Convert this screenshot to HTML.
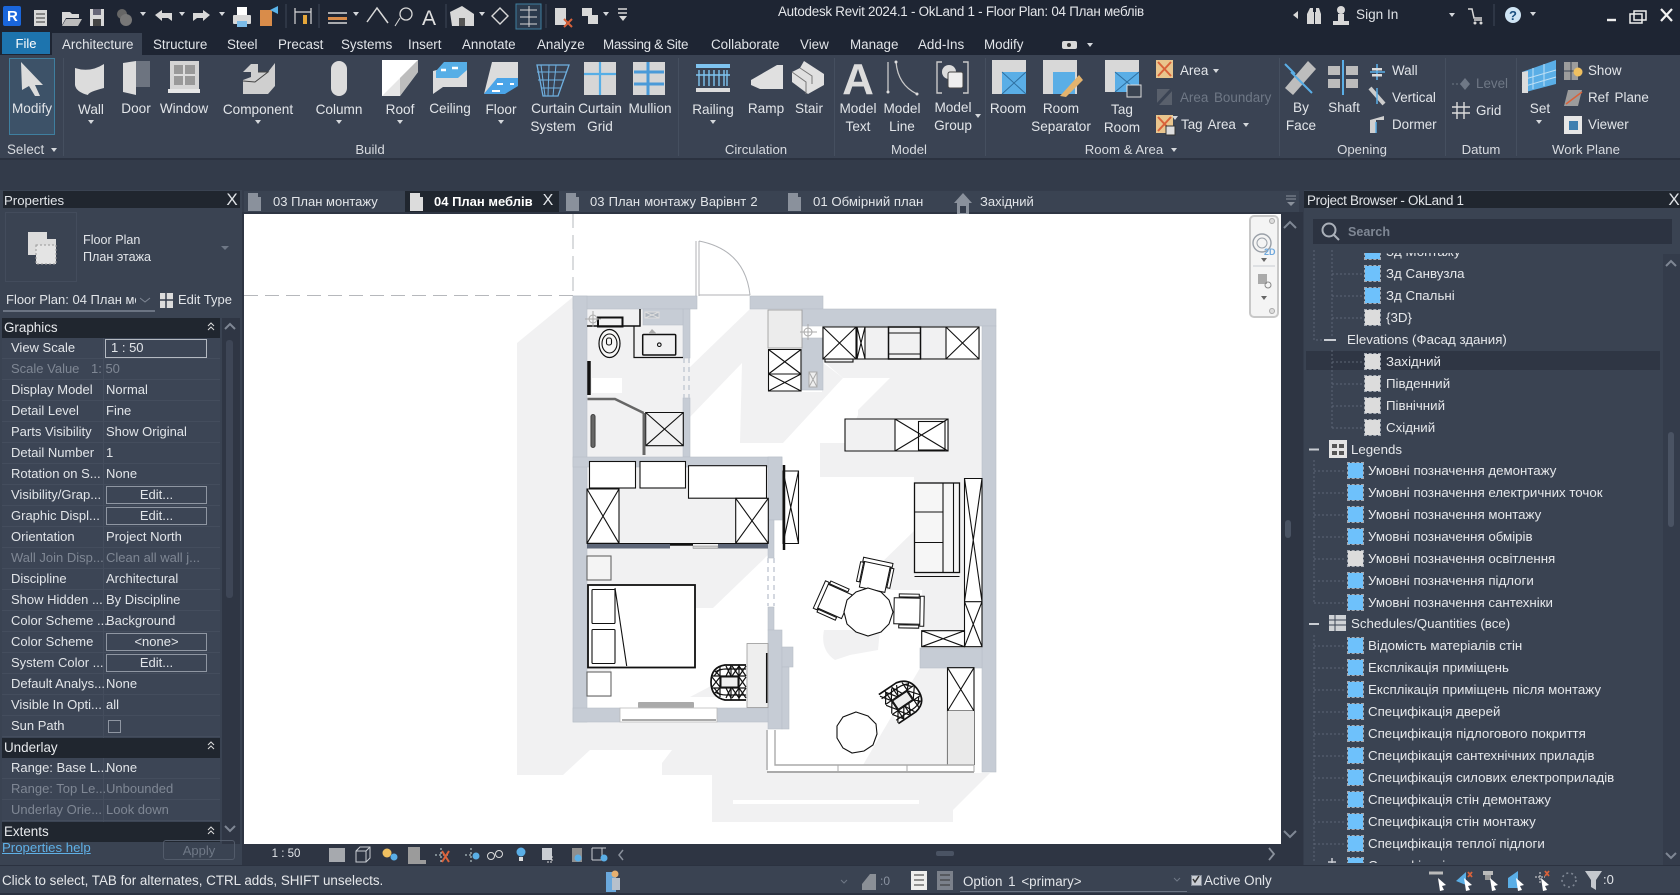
<!DOCTYPE html>
<html><head><meta charset="utf-8"><title>Revit</title>
<style>
html,body{margin:0;padding:0;background:#343c4b}
#r{position:relative;width:1680px;height:895px;overflow:hidden;background:#343c4b;font-family:"Liberation Sans","Noto Sans CJK JP",sans-serif}
.a{position:absolute}
.t{position:absolute;white-space:nowrap;font-size:13px;line-height:16px;color:#e2e5e9;transform:translateY(-50%)}
.c{position:absolute;white-space:nowrap;font-size:13.6px;line-height:16px;color:#e2e5e9;transform:translate(-50%,-50%);text-align:center}
.d{color:#7f8794}
.b{position:absolute;left:106px;width:99px;height:16px;border:1px solid #8f96a2;text-align:center;font-size:13px;line-height:16px;color:#e2e5e9}
.h{position:absolute;left:2px;width:218px;background:#20262f;color:#e8eaed;font-size:13.4px;line-height:20px;height:20px;padding-left:2px;box-sizing:border-box}
.i{position:absolute;width:15px;height:15px;border:1.5px dashed #a4aab3;background:#6ec1fb;background-clip:padding-box}
.g{background:#dcdcdc;background-clip:padding-box}
.pb{position:absolute;white-space:nowrap;font-size:13.3px;line-height:16px;color:#e6e8eb;transform:translateY(-50%);letter-spacing:0}
svg{position:absolute;left:0;top:0}
</style></head><body><div id="r">

<!-- chrome backgrounds -->
<div class="a" style="left:0;top:0;width:1680px;height:55px;background:#1e2533"></div>
<div class="a" style="left:52px;top:33px;width:90px;height:22px;background:#3a4353"></div>
<div class="a" style="left:2px;top:32px;width:48px;height:22px;background:#1d74ae"></div>
<div class="a" style="left:0;top:55px;width:1680px;height:103px;background:#3a4353"></div>
<div class="a" style="left:0;top:158px;width:1680px;height:32px;background:#333b4a;border-top:2px solid #2b3240;box-sizing:border-box"></div>
<div class="a" style="left:9px;top:58px;width:46px;height:77px;background:#3d5268;border:1px solid #3f7f9f;box-sizing:border-box"></div>

<!-- ribbon separators -->
<div class="a" style="left:63px;top:58px;width:1px;height:98px;background:#454f5f"></div>
<div class="a" style="left:678px;top:58px;width:1px;height:98px;background:#454f5f"></div>
<div class="a" style="left:834px;top:58px;width:1px;height:98px;background:#454f5f"></div>
<div class="a" style="left:985px;top:58px;width:1px;height:98px;background:#454f5f"></div>
<div class="a" style="left:1279px;top:58px;width:1px;height:98px;background:#454f5f"></div>
<div class="a" style="left:1445px;top:58px;width:1px;height:98px;background:#454f5f"></div>
<div class="a" style="left:1516px;top:58px;width:1px;height:98px;background:#454f5f"></div>

<!-- title / tabs text -->
<div class="t" style="left:778px;top:12px;font-size:13.4px;color:#e4e6ea;letter-spacing:-.25px">Autodesk Revit 2024.1 - OkLand 1 - Floor Plan: 04 План меблів</div>
<div class="t" style="left:1356px;top:15px;font-size:13.6px;color:#dfe2e6">Sign In</div>
<div class="c" style="left:26px;top:44px;font-size:13px;color:#fff">File</div>
<div class="t" style="left:62px;top:45px;font-size:13.4px">Architecture</div>
<div class="t" style="left:153px;top:45px;font-size:13.4px">Structure</div>
<div class="t" style="left:227px;top:45px;font-size:13.4px">Steel</div>
<div class="t" style="left:278px;top:45px;font-size:13.4px">Precast</div>
<div class="t" style="left:341px;top:45px;font-size:13.4px">Systems</div>
<div class="t" style="left:408px;top:45px;font-size:13.4px">Insert</div>
<div class="t" style="left:462px;top:45px;font-size:13.4px">Annotate</div>
<div class="t" style="left:537px;top:45px;font-size:13.4px">Analyze</div>
<div class="t" style="left:603px;top:45px;font-size:13.4px;letter-spacing:-.3px">Massing &amp; Site</div>
<div class="t" style="left:711px;top:45px;font-size:13.4px">Collaborate</div>
<div class="t" style="left:800px;top:45px;font-size:13.4px">View</div>
<div class="t" style="left:850px;top:45px;font-size:13.4px">Manage</div>
<div class="t" style="left:918px;top:45px;font-size:13.4px">Add-Ins</div>
<div class="t" style="left:984px;top:45px;font-size:13.4px">Modify</div>

<!-- ribbon labels -->
<div class="c" style="left:32px;top:109px">Modify</div>
<div class="c" style="left:91px;top:110px">Wall</div>
<div class="c" style="left:136px;top:109px">Door</div>
<div class="c" style="left:184px;top:109px">Window</div>
<div class="c" style="left:258px;top:110px">Component</div>
<div class="c" style="left:339px;top:110px">Column</div>
<div class="c" style="left:400px;top:110px">Roof</div>
<div class="c" style="left:450px;top:109px">Ceiling</div>
<div class="c" style="left:501px;top:110px">Floor</div>
<div class="c" style="left:553px;top:118px;line-height:18px">Curtain<br>System</div>
<div class="c" style="left:600px;top:118px;line-height:18px">Curtain<br>Grid</div>
<div class="c" style="left:650px;top:109px">Mullion</div>
<div class="c" style="left:713px;top:110px">Railing</div>
<div class="c" style="left:766px;top:109px">Ramp</div>
<div class="c" style="left:809px;top:109px">Stair</div>
<div class="c" style="left:858px;top:118px;line-height:18px">Model<br>Text</div>
<div class="c" style="left:902px;top:118px;line-height:18px">Model<br>Line</div>
<div class="c" style="left:953px;top:117px;line-height:18px">Model<br>Group</div>
<div class="c" style="left:1008px;top:109px">Room</div>
<div class="c" style="left:1061px;top:118px;line-height:18px">Room<br>Separator</div>
<div class="c" style="left:1122px;top:119px;line-height:18px">Tag<br>Room</div>
<div class="t" style="left:1180px;top:71px;font-size:13.4px">Area</div>
<div class="t d" style="left:1180px;top:98px;font-size:13.4px;word-spacing:2px;color:#6f7886">Area Boundary</div>
<div class="t" style="left:1181px;top:125px;font-size:13.4px;word-spacing:2px">Tag Area</div>
<div class="c" style="left:1301px;top:117px;line-height:18px">By<br>Face</div>
<div class="c" style="left:1344px;top:108px">Shaft</div>
<div class="t" style="left:1392px;top:71px;font-size:13.4px">Wall</div>
<div class="t" style="left:1392px;top:98px;font-size:13.4px">Vertical</div>
<div class="t" style="left:1392px;top:125px;font-size:13.4px">Dormer</div>
<div class="t" style="left:1476px;top:84px;font-size:13.4px;color:#6f7886">Level</div>
<div class="t" style="left:1476px;top:111px;font-size:13.4px">Grid</div>
<div class="c" style="left:1540px;top:109px">Set</div>
<div class="t" style="left:1588px;top:71px;font-size:13.4px">Show</div>
<div class="t" style="left:1588px;top:98px;font-size:13.4px;word-spacing:2px">Ref Plane</div>
<div class="t" style="left:1588px;top:125px;font-size:13.4px">Viewer</div>
<div class="t" style="left:7px;top:150px;font-size:13.4px;color:#d8dbe0">Select</div>
<div class="c" style="left:370px;top:150px;font-size:13.2px;color:#d8dbe0">Build</div>
<div class="c" style="left:756px;top:150px;font-size:13.2px;color:#d8dbe0">Circulation</div>
<div class="c" style="left:909px;top:150px;font-size:13.2px;color:#d8dbe0">Model</div>
<div class="c" style="left:1124px;top:150px;font-size:13.2px;color:#d8dbe0">Room &amp; Area</div>
<div class="c" style="left:1362px;top:150px;font-size:13.2px;color:#d8dbe0">Opening</div>
<div class="c" style="left:1481px;top:150px;font-size:13.2px;color:#d8dbe0">Datum</div>
<div class="c" style="left:1586px;top:150px;font-size:13.2px;color:#d8dbe0">Work Plane</div>

<!-- Properties panel -->
<div class="a" style="left:0;top:190px;width:242px;height:675px;background:#3a4352"></div>
<div class="a" style="left:3px;top:191px;width:237px;height:17px;background:#20262f"></div>
<div class="t" style="left:4px;top:201px;font-size:13.2px">Properties</div>
<div class="c" style="left:232px;top:200px;font-size:17px;color:#dfe2e6">X</div>
<div class="a" style="left:5px;top:212px;width:72px;height:70px;border:1px solid #434c5c;box-sizing:border-box"></div>
<div class="t" style="left:83px;top:240px;font-size:12.6px">Floor Plan</div>
<div class="t" style="left:83px;top:257px;font-size:12.6px">План этажа</div>
<div class="t" style="left:6px;top:300px;font-size:13px;width:130px;overflow:hidden">Floor Plan: 04 План меблів</div>
<div class="a" style="left:3px;top:310px;width:152px;height:2px;background:#6b7483"></div>
<div class="t" style="left:178px;top:300px;font-size:13px">Edit Type</div>
<div class="a" style="left:222px;top:318px;width:18px;height:526px;background:#2f3644"></div>
<div class="a" style="left:226px;top:340px;width:7px;height:258px;background:#3e4656;border-radius:3px"></div>
<div class="a" style="left:2px;top:338px;width:218px;height:494px;background:repeating-linear-gradient(to bottom,#3c4555 0,#3c4555 20px,#444d5d 20px,#444d5d 21px)"></div>
<div class="a" style="left:103px;top:338px;width:1px;height:494px;background:#444d5d"></div>
<div class="h" style="top:318px">Graphics</div>
<div class="h" style="top:738px">Underlay</div>
<div class="h" style="top:822px">Extents</div>

<div class="t" style="left:11px;top:348px">View Scale</div><div class="b" style="left:105px;top:339px;height:17px;text-align:left;padding-left:5px;width:95px;border-color:#b5bac2">1 : 50</div>
<div class="t d" style="left:11px;top:369px">Scale Value</div><div class="t d" style="left:91px;top:369px">1: 50</div>
<div class="t" style="left:11px;top:390px">Display Model</div><div class="t" style="left:106px;top:390px">Normal</div>
<div class="t" style="left:11px;top:411px">Detail Level</div><div class="t" style="left:106px;top:411px">Fine</div>
<div class="t" style="left:11px;top:432px">Parts Visibility</div><div class="t" style="left:106px;top:432px">Show Original</div>
<div class="t" style="left:11px;top:453px">Detail Number</div><div class="t" style="left:106px;top:453px">1</div>
<div class="t" style="left:11px;top:474px">Rotation on S...</div><div class="t" style="left:106px;top:474px">None</div>
<div class="t" style="left:11px;top:495px">Visibility/Grap...</div><div class="b" style="top:486px">Edit...</div>
<div class="t" style="left:11px;top:516px">Graphic Displ...</div><div class="b" style="top:507px">Edit...</div>
<div class="t" style="left:11px;top:537px">Orientation</div><div class="t" style="left:106px;top:537px">Project North</div>
<div class="t d" style="left:11px;top:558px">Wall Join Disp...</div><div class="t d" style="left:106px;top:558px">Clean all wall j...</div>
<div class="t" style="left:11px;top:579px">Discipline</div><div class="t" style="left:106px;top:579px">Architectural</div>
<div class="t" style="left:11px;top:600px">Show Hidden ...</div><div class="t" style="left:106px;top:600px">By Discipline</div>
<div class="t" style="left:11px;top:621px">Color Scheme ...</div><div class="t" style="left:106px;top:621px">Background</div>
<div class="t" style="left:11px;top:642px">Color Scheme</div><div class="b" style="top:633px">&lt;none&gt;</div>
<div class="t" style="left:11px;top:663px">System Color ...</div><div class="b" style="top:654px">Edit...</div>
<div class="t" style="left:11px;top:684px">Default Analys...</div><div class="t" style="left:106px;top:684px">None</div>
<div class="t" style="left:11px;top:705px">Visible In Opti...</div><div class="t" style="left:106px;top:705px">all</div>
<div class="t" style="left:11px;top:726px">Sun Path</div><div class="a" style="left:108px;top:720px;width:11px;height:11px;border:1px solid #8f96a2"></div>
<div class="t" style="left:11px;top:768px">Range: Base L...</div><div class="t" style="left:106px;top:768px">None</div>
<div class="t d" style="left:11px;top:789px">Range: Top Le...</div><div class="t d" style="left:106px;top:789px">Unbounded</div>
<div class="t d" style="left:11px;top:810px">Underlay Orie...</div><div class="t d" style="left:106px;top:810px">Look down</div>
<div class="t" style="left:2px;top:848px;font-size:13.2px;color:#5fb0e6;text-decoration:underline">Properties help</div>
<div class="a" style="left:163px;top:840px;width:72px;height:20px;border:1px solid #525b6a;border-radius:3px;box-sizing:border-box;color:#6f7886;font-size:13px;line-height:19px;text-align:center">Apply</div>

<!-- Document tabs -->
<div class="a" style="left:244px;top:191px;width:1055px;height:23px;background:#3a4352"></div>
<div class="a" style="left:405px;top:191px;width:154px;height:23px;background:#20262f"></div>
<div class="t" style="left:273px;top:202px;font-size:13px">03 План монтажу</div>
<div class="t" style="left:434px;top:202px;font-size:13px;font-weight:bold;color:#fff;letter-spacing:0">04 План меблів</div>
<div class="c" style="left:548px;top:201px;font-size:16px">X</div>
<div class="t" style="left:590px;top:202px;font-size:13px;word-spacing:.6px">03 План монтажу  Варівнт 2</div>
<div class="t" style="left:813px;top:202px;font-size:13.2px">01 Обмірний план</div>
<div class="t" style="left:980px;top:202px;font-size:13px">Західний</div>

<!-- canvas surround -->
<div class="a" style="left:242px;top:212px;width:1061px;height:653px;background:#2e3543"></div>
<div class="a" style="left:244px;top:214px;width:1037px;height:630px;background:#fff"></div>
<div class="c" style="left:286px;top:854px;font-size:11.5px">1 : 50</div>

<!-- Project browser -->
<div class="a" style="left:1304px;top:190px;width:376px;height:675px;background:#3a4352"></div>
<div class="a" style="left:1304px;top:191px;width:376px;height:17px;background:#20262f"></div>
<div class="t" style="left:1307px;top:201px;font-size:13.4px;letter-spacing:-.3px">Project Browser - OkLand 1</div>
<div class="c" style="left:1674px;top:200px;font-size:17px;color:#dfe2e6">X</div>
<div class="a" style="left:1313px;top:219px;width:359px;height:25px;background:#2c3341"></div>
<div class="t" style="left:1348px;top:232px;font-size:12.6px;font-weight:bold;color:#7f8794">Search</div>
<div class="a" style="left:1663px;top:254px;width:17px;height:611px;background:#343c4b"></div>
<div class="a" style="left:1668px;top:432px;width:6px;height:95px;background:#4a5363;border-radius:3px"></div>
<div class="a" style="left:1306px;top:351px;width:354px;height:19px;background:#2f3644"></div>

<div class="a" style="left:1304px;top:250px;width:358px;height:613px;overflow:hidden">
 <svg width="358" height="613" style="left:0;top:0" fill="none" stroke="#5c6575" stroke-width="1" stroke-dasharray="2 2">
  <path d="M28 0V88M28 24H58M28 46H58M28 68H58M10 0V90H24"/>
  <path d="M28 100V178M28 112H58M28 134H58M28 156H58M28 178H58"/>
  <path d="M10 210V353M10 221H40M10 243H40M10 265H40M10 287H40M10 309H40M10 331H40M10 353H40"/>
  <path d="M10 385V613M10 396H40M10 418H40M10 440H40M10 462H40M10 484H40M10 506H40M10 528H40M10 550H40M10 572H40M10 594H40"/>
  <path stroke-dasharray="none" stroke="#c9cdd3" stroke-width="2" d="M20 90H32M5 199.500H15M5 374H15"/>
  <path stroke-dasharray="none" stroke="#c9cdd3" stroke-width="1.500" d="M24 612H32M28 608V613"/>
 </svg>
</div>
<div class="a" style="left:1304px;top:248px;width:358px;height:615px;overflow:hidden;clip-path:inset(5px 0 0 0)">
 <div class="i" style="left:60px;top:-5px"></div><div class="pb" style="left:82px;top:4px">Зд Монтажу</div>
 <div class="i" style="left:60px;top:17px"></div><div class="pb" style="left:82px;top:26px">Зд Санвузла</div>
 <div class="i" style="left:60px;top:39px"></div><div class="pb" style="left:82px;top:48px">Зд Спальні</div>
 <div class="i g" style="left:60px;top:61px"></div><div class="pb" style="left:82px;top:70px">{3D}</div>
 <div class="pb" style="left:43px;top:92px">Elevations (Фасад здания)</div>
 <div class="i g" style="left:60px;top:105px"></div><div class="pb" style="left:82px;top:114px">Західний</div>
 <div class="i g" style="left:60px;top:127px"></div><div class="pb" style="left:82px;top:136px">Південний</div>
 <div class="i g" style="left:60px;top:149px"></div><div class="pb" style="left:82px;top:158px">Північний</div>
 <div class="i g" style="left:60px;top:171px"></div><div class="pb" style="left:82px;top:180px">Східний</div>
 <div class="pb" style="left:47px;top:201.500px">Legends</div>
 <div class="i" style="left:43px;top:214px"></div><div class="pb" style="left:64px;top:223px">Умовні позначення демонтажу</div>
 <div class="i" style="left:43px;top:236px"></div><div class="pb" style="left:64px;top:245px">Умовні позначення електричних точок</div>
 <div class="i" style="left:43px;top:258px"></div><div class="pb" style="left:64px;top:267px">Умовні позначення монтажу</div>
 <div class="i" style="left:43px;top:280px"></div><div class="pb" style="left:64px;top:289px">Умовні позначення обмірів</div>
 <div class="i g" style="left:43px;top:302px"></div><div class="pb" style="left:64px;top:311px">Умовні позначення освітлення</div>
 <div class="i" style="left:43px;top:324px"></div><div class="pb" style="left:64px;top:333px">Умовні позначення підлоги</div>
 <div class="i" style="left:43px;top:346px"></div><div class="pb" style="left:64px;top:355px">Умовні позначення сантехніки</div>
 <div class="pb" style="left:47px;top:376px">Schedules/Quantities (все)</div>
 <div class="i" style="left:43px;top:389px"></div><div class="pb" style="left:64px;top:398px">Відомість матеріалів стін</div>
 <div class="i" style="left:43px;top:411px"></div><div class="pb" style="left:64px;top:420px">Експлікація приміщень</div>
 <div class="i" style="left:43px;top:433px"></div><div class="pb" style="left:64px;top:442px">Експлікація приміщень після монтажу</div>
 <div class="i" style="left:43px;top:455px"></div><div class="pb" style="left:64px;top:464px">Специфікація дверей</div>
 <div class="i" style="left:43px;top:477px"></div><div class="pb" style="left:64px;top:486px">Специфікація підлогового покриття</div>
 <div class="i" style="left:43px;top:499px"></div><div class="pb" style="left:64px;top:508px">Специфікація сантехнічних приладів</div>
 <div class="i" style="left:43px;top:521px"></div><div class="pb" style="left:64px;top:530px">Специфікація силових електроприладів</div>
 <div class="i" style="left:43px;top:543px"></div><div class="pb" style="left:64px;top:552px">Специфікація стін демонтажу</div>
 <div class="i" style="left:43px;top:565px"></div><div class="pb" style="left:64px;top:574px">Специфікація стін монтажу</div>
 <div class="i" style="left:43px;top:587px"></div><div class="pb" style="left:64px;top:596px">Специфікація теплої підлоги</div>
 <div class="i" style="left:43px;top:609px"></div><div class="pb" style="left:64px;top:618px">Специфікація</div>
</div>

<!-- status bar -->
<div class="a" style="left:0;top:865px;width:1680px;height:30px;background:#3a4352;border-top:1px solid #2b3240;box-sizing:border-box"></div>
<div class="a" style="left:0;top:893px;width:1680px;height:2px;background:#2b3240"></div>
<div class="t" style="left:2px;top:881px;font-size:13.4px;color:#e6e8eb">Click to select, TAB for alternates, CTRL adds, SHIFT unselects.</div>
<div class="t" style="left:963px;top:882px;font-size:13.4px;word-spacing:2px">Option 1 &lt;primary&gt;</div>
<div class="a" style="left:960px;top:891px;width:227px;height:1px;background:#6b7483"></div>
<div class="a" style="left:1191px;top:875px;width:9px;height:9px;background:#c9cdd3;border:1px solid #7f8794"></div>
<div class="t" style="left:1204px;top:881px;font-size:13.4px">Active Only</div>
<div class="t" style="left:880px;top:881px;font-size:12px;color:#8a92a0">:0</div>
<div class="t" style="left:1603px;top:880px;font-size:13px">:0</div>

<!-- floor plan + all icons -->
<svg width="1680" height="895" viewBox="0 0 1680 895">
<defs>
 <polygon id="dd" points="-3,-2 3,-2 0,2" fill="#d5d8dc"/>
 <g id="ch"><rect x="-13" y="-13" width="26" height="27" fill="#fff" stroke="#111" stroke-width="1"/><rect x="-15" y="-16" width="30" height="4" fill="#fff" stroke="#111" stroke-width="1"/><rect x="-17" y="-11" width="3" height="20" fill="#fff" stroke="#111" stroke-width="1"/><rect x="14" y="-11" width="3" height="20" fill="#fff" stroke="#111" stroke-width="1"/></g>
 <g id="arm" fill="none" stroke="#111" stroke-width="1.200">
  <path d="M17 -17H-4Q-18 -15 -18 0Q-18 15 -4 18H17" stroke-width="1.700" fill="#fff"/>
  <path d="M-14 -10Q-9 -13 -3 -13H17M-14 10Q-9 13 -3 13H17M-9 -15V15M2 -17V18M10 -17V18M-18 -6H17M-18 6H17"/>
  <path d="M-15 -12L-9 -6M-9 -13L-15 -6M-3 -16L2 -6M2 -16L-3 -6M3 -16L10 -6M10 -16L3 -6M10 -16L17 -6M17 -16L10 -6M-15 12L-9 6M-9 13L-15 6M-3 16L2 6M2 16L-3 6M3 16L10 6M10 16L3 6M10 16L17 6M17 16L10 6M-17 -5L-9 5M-9 -5L-17 5M10 -5L17 5M17 -5L10 5"/>
  <rect x="-8" y="-5" width="17" height="10" fill="#eee" stroke-width="1"/>
 </g>
</defs>

<!-- drawing, clipped to canvas -->
<clipPath id="cv"><rect x="244" y="214" width="1037" height="630"/></clipPath>
<g clip-path="url(#cv)">
 <!-- shadow -->
 <path fill="#f1f1f2" d="M517 343L573 297V722H768V773H990L953 810L953 822H712V775H662V763L672 750H590L563 775H517Z"/>
 <rect x="733" y="800" width="186" height="4" fill="#fff"/>
 <path fill="#f1f1f2" d="M587 309H690V457H587ZM587 467H768V708H587Z"/>
 <path fill="#fff" d="M713 608L768 555V643H747V667L690 697H611V668H695V608ZM587 697H747V708H587ZM592 378H622V393H592Z"/>
 <!-- hall / living gray bands -->
 <path fill="#f1f1f2" d="M750 309H802V392H822V362L843 378L783 443H740L742 363L690 417V367Z"/>
 <path fill="#f1f1f2" d="M822 360H982V648H922V630V590H880L877 567L915 530L914 477H820V443H845L858 415V410L890 378H843Z"/>
 <path fill="#f1f1f2" d="M920 668H947V765H863Z"/>
 <path fill="#f1f1f2" d="M824 630H880L878 650L850 655L835 660Q820 650 824 630Z"/>

 <!-- guide lines -->
 <path d="M573 214V295" stroke="#b6b8bc" stroke-width="1" stroke-dasharray="14 7" fill="none"/>
 <path d="M244 295.500H573" stroke="#b6b8bc" stroke-width="1" stroke-dasharray="14 7" fill="none"/>
 <!-- door -->
 <path d="M696 241V296M699 241V296M699 295H750M699 241Q745 250 750 295" stroke="#b0b2b6" fill="none" stroke-width="1"/>

 <!-- walls -->
 <g fill="#c6ccd5" stroke="#b8bec8" stroke-width=".6">
  <rect x="573" y="296" width="124" height="13"/>
  <rect x="573" y="296" width="14" height="426"/>
  <rect x="750" y="296" width="73" height="13"/>
  <rect x="802" y="309" width="194" height="17"/>
  <rect x="982" y="326" width="14" height="446"/>
  <rect x="683" y="309" width="7" height="49"/>
  <rect x="683" y="398" width="7" height="59"/>
  <rect x="573" y="457" width="209" height="10"/>
  <rect x="768" y="457" width="14" height="63"/>
  <rect x="768" y="520" width="6" height="38"/>
  <rect x="768" y="607" width="6" height="23"/>
  <rect x="768" y="630" width="14" height="99"/>
  <rect x="782" y="647" width="11" height="20"/>
  <rect x="782" y="667" width="7" height="62"/>
  <rect x="573" y="708" width="47" height="14"/>
  <rect x="717" y="708" width="51" height="14"/>
  <rect x="920" y="648" width="62" height="20"/>
  <rect x="802" y="338" width="21" height="52"/>
  <rect x="643" y="309" width="40" height="16"/>
 </g>
 <rect x="768" y="310" width="34" height="38" fill="#ececec" stroke="#999" stroke-width=".8"/>
 <path d="M768 558V606M774 558V606" stroke="#c6ccd5" stroke-width="1.500" stroke-dasharray="5 4" fill="none"/>
 <path d="M684 358V398M689 358V398" stroke="#c6ccd5" stroke-width="1.500" stroke-dasharray="5 4" fill="none"/>

 <!-- furniture -->
 <g fill="none" stroke="#111" stroke-width="1.100">
  <rect x="823" y="327" width="156" height="32" fill="#f1f1f2"/>
  <path d="M823 327H856V359H823ZM823 327L856 359M856 327L823 359"  fill="#fff"/>
  <path d="M857 327H865V359H857ZM857 327L865 359M865 327L857 359" fill="#fff"/>
  <rect x="888.500" y="327" width="32" height="32" stroke-width="1.500"/>
  <path d="M889 333H920M889 354H920"/>
  <path d="M946 327H979V359H946ZM946 327L979 359M979 327L946 359" fill="#fff"/>
  <rect x="825" y="359" width="28" height="3"/>
  <path d="M768.500 349.500H801V391H768.500ZM768.500 374H801M768.500 349.500L801 374M801 349.500L768.500 374M768.500 374L801 391M801 374L768.500 391" fill="#fff"/>
  <path d="M845 419H948V451H845Z" fill="#f1f1f2"/>
  <path d="M895 419H948V451H895ZM895 419L948 451M948 419L895 451" fill="#fff"/>
  <rect x="918.500" y="421.500" width="26.500" height="28.500"/>
  <!-- bathroom -->
  <path d="M587 326H640V309" stroke-width="1.500"/>
  <ellipse cx="609.500" cy="343.500" rx="10.500" ry="14" stroke-width="1.200" fill="#f8f8f8"/>
  <ellipse cx="609.500" cy="343.500" rx="7.500" ry="9.500"/>
  <rect x="606.500" y="338" width="5" height="7" rx="2"/>
  <rect x="598" y="317.500" width="24.500" height="9" stroke-width="2"/>
  <path d="M634 326V357.500H683" stroke-width="1.200"/>
  <rect x="642.700" y="334.500" width="33" height="20.500" rx="1" stroke-width="1.500"/>
  <circle cx="659.300" cy="344.700" r="1.800"/>
  <path d="M589 361V395" stroke-width="3.500"/>
  <path d="M645.700 412.500H683.300V445.700H645.700ZM645.700 412.500L683.300 445.700M683.300 412.500L645.700 445.700"/>
  <path d="M587.500 399H615L643.700 413" stroke="#666" stroke-width="2.500"/>
  <path d="M644 413V455" stroke="#666" stroke-width="3"/>
  <rect x="591" y="414.500" width="4" height="33" fill="#666" stroke="#444" rx="2"/>
  <!-- closets -->
  <rect x="589.500" y="461.500" width="46" height="26.500" fill="#fff"/>
  <rect x="640" y="461.500" width="45.500" height="26.500" fill="#fff"/>
  <rect x="688.500" y="465.700" width="78" height="32.500" fill="#fff"/>
  <path d="M587 489H619V543.300H587ZM587 489L619 543.300M619 489L587 543.300" fill="#fff"/>
  <path d="M735.700 498.300H768.300V543.300H735.700ZM735.700 498.300L768.300 543.300M768.300 498.300L735.700 543.300" fill="#fff"/>
  <path d="M587 543.500H768"/>
  <path d="M783 471H798.500V543.500H783ZM783 471L798.500 543.500M798.500 471L783 543.500" fill="#fff"/>
  <path d="M784 465V550" stroke-width="2.500"/>
  <path d="M670 544.500H693" stroke-width="2.500"/>
  <!-- bedroom -->
  <rect x="587" y="556" width="24" height="24" stroke="#666" fill="#f4f4f4"/>
  <rect x="587" y="672" width="24" height="24" stroke="#666" fill="#fff"/>
  <rect x="588" y="585" width="107" height="82.500" fill="#fff" stroke-width="1.800"/>
  <rect x="592" y="589.500" width="23" height="34" rx="1"/>
  <rect x="592" y="629.500" width="23" height="34" rx="1"/>
  <path d="M615 588L626.700 666"/>
  <!-- sofa -->
  <rect x="914.500" y="483" width="45" height="89.500" fill="#f6f6f6" stroke-width="1.300"/>
  <path d="M943 483V572M953.500 483V572M914.500 512H943M914.500 542.500H943M914.500 576.500H959.500"/>
  <!-- tall wardrobe -->
  <path d="M964.500 478.500H982V646.700H964.500ZM964.500 601.700H982M964.500 478.500L982 601.700M982 478.500L964.500 601.700M964.500 601.700L982 646.700M982 601.700L964.500 646.700" fill="#fff"/>
  <path d="M921.700 630.700H964.500V646.700H921.700ZM921.700 630.700L964.500 646.700M964.500 630.700L921.700 646.700" fill="#fff"/>
  <path d="M947.500 667.700H974V711H947.500ZM947.500 667.700L974 711M974 667.700L947.500 711" fill="#fff"/>
  <path d="M947.500 711V765M974 711V765"/>
 </g>
 <path d="M587 544H670V548.500H587ZM718 544H768V548.500H718Z" fill="#5d6678"/>
 <path d="M693 546H718V548.500H693Z" fill="#ccc" stroke="#888" stroke-width=".5"/>
 <rect x="638" y="702" width="56" height="6" fill="#aaa" rx="1"/>
 <rect x="620" y="708" width="97" height="14" fill="#fff" stroke="#bbb" stroke-width=".8"/>
 <path d="M622 720H716" stroke="#aaa" stroke-width="2"/>
 <rect x="747" y="643.500" width="21" height="64" fill="#eee" stroke="#999" stroke-width=".8"/>
 <path d="M766.700 653V703" stroke="#111" stroke-width="1.500"/>
 <rect x="809" y="372" width="8" height="15" fill="#eee" stroke="#aaa"/>
 <path d="M809 372L817 387M817 372L809 387" stroke="#aaa" fill="none"/>
 <path d="M645 312H659V318H645ZM645 312L659 318M659 312L645 318" stroke="#ddd" fill="#aeb5bf"/>
 <path d="M652 329L648 334H657Z" fill="#aaa"/>
 <rect x="947.500" y="711" width="26.500" height="54" fill="#eaeaea"/>
 <!-- crosshairs -->
 <g stroke="#aaa" fill="none"><circle cx="593" cy="319" r="4"/><path d="M585 319H601M593 311V327"/><circle cx="808" cy="332" r="4"/><path d="M800 332H817M808 324V340"/></g>
 <!-- balcony window -->
 <g fill="none" stroke="#aaa" stroke-width="1"><path d="M767 730V770M775 730V765H974M767 772H974" stroke-width="1.400"/><path d="M838 765V772M907 765V772M974 765V772" /></g>
 <path d="M767 772H974" stroke="#aaa" stroke-width="2" fill="none"/>
 <!-- chairs and tables -->
 <use href="#ch" transform="translate(875 576) rotate(12)"/>
 <use href="#ch" transform="translate(834 601) rotate(-66)"/>
 <use href="#ch" transform="translate(908 611) rotate(91)"/>
 <polygon points="868,588 881,592 889,600 893,612 889,624 881,632 868,636 856,632 847,624 844,612 847,600 856,592" fill="#fff" stroke="#111" stroke-width="1.100"/>
 <polygon points="856,712 868,716 876,724 877,734 873,745 864,751 852,753 843,748 837,738 837,726 843,717" fill="#fff" stroke="#111" stroke-width="1.100"/>
 <use href="#arm" transform="translate(729 682)"/>
 <use href="#arm" transform="translate(903 700) rotate(146)"/>
</g>

<!-- view cube/nav bar -->
<rect x="1250" y="216" width="28" height="101" rx="4" fill="#f4f4f4" stroke="#c8c8c8" stroke-width="2"/>
<circle cx="1272" cy="221" r="2.500" fill="#ddd" stroke="#aaa"/><circle cx="1272" cy="311" r="2.500" fill="#ddd" stroke="#aaa"/>
<circle cx="1262" cy="243" r="9" fill="none" stroke="#9aa0a8" stroke-width="1.400"/><circle cx="1262" cy="243" r="5" fill="none" stroke="#9aa0a8"/>
<text x="1264" y="255" font-family="Liberation Sans" font-size="9" font-weight="bold" fill="#6fa8dc">2D</text>
<polygon points="1261,258 1267,258 1264,262" fill="#666"/><path d="M1253 266H1275" stroke="#c8ccd2"/>
<rect x="1258" y="274" width="9" height="10" fill="#aaa"/><circle cx="1268" cy="285" r="3" fill="none" stroke="#888"/>
<polygon points="1261,296 1267,296 1264,300" fill="#666"/>

<!-- QAT -->
<rect x="3" y="6" width="18" height="20" rx="2" fill="#1a66dc"/>
<text x="7" y="21" font-family="Liberation Sans" font-size="15" font-weight="bold" fill="#fff">R</text>
<g fill="#d8d8d8">
 <path d="M34 10H47V26H34Z"/><path d="M36 14H45M36 18H45M36 22H45" stroke="#333" fill="none"/>
 <path d="M62 12H70L72 14H79V18H66L62 25Z"/><path d="M66 19H82L78 26H62Z" fill="#bbb"/>
 <path d="M90 9H104V26H90Z"/><rect x="93" y="9" width="8" height="6" fill="#667"/><rect x="93" y="19" width="8" height="7" fill="#444"/>
 <circle cx="122" cy="14" r="5" fill="#666"/><circle cx="126" cy="20" r="6" fill="#777"/>
 <path d="M155 15L162 10V13H172V21L168 18H162V21Z"/>
 <path d="M210 15L203 10V13H193V21L197 18H203V21Z"/>
 <rect x="233" y="15" width="18" height="9" rx="1"/><rect x="237" y="7" width="10" height="8" fill="#fff"/><rect x="237" y="21" width="10" height="6" fill="#7bbbe8"/>
 <rect x="260" y="10" width="12" height="16" fill="#d98c4a"/><path d="M270 10L278 6V14Z" fill="#5ab4ea"/>
 <path d="M295 8V24M311 8V24M295 12H311" fill="none" stroke="#d8d8d8" stroke-width="1.200"/><rect x="303" y="15" width="4" height="9" fill="#e6a73a"/>
 <path d="M328 13H347M328 23H347" stroke="#d8d8d8" stroke-width="1.500" fill="none"/><rect x="328" y="17" width="19" height="3" fill="#d98c4a"/>
 <path d="M367 22L377 8L388 23" fill="none" stroke="#d8d8d8" stroke-width="1.500"/>
 <circle cx="406" cy="14" r="6" fill="none" stroke="#d8d8d8" stroke-width="1.300"/><path d="M400 18L395 26" stroke="#d8d8d8" fill="none"/>
 <path d="M450 12L462 6L474 14V26H452Z" /><rect x="459" y="18" width="6" height="8" fill="#555"/>
 <path d="M500 8L508 16L500 24L492 16Z" fill="none" stroke="#d8d8d8" stroke-width="1.400"/>
 <rect x="516" y="4" width="25" height="25" fill="#2b3a4c" stroke="#3f7f9f"/>
 <path d="M520 10H537M520 17H537M520 24H537M529 6V27" stroke="#d8d8d8" fill="none"/>
 <rect x="555" y="8" width="11" height="17"/><path d="M564 19L572 27M572 19L564 27" stroke="#d9623a" stroke-width="2" fill="none"/>
 <rect x="582" y="8" width="10" height="8"/><rect x="588" y="15" width="10" height="9"/>
 <path d="M618 9H627M618 13H627" stroke="#d8d8d8" stroke-width="1.500" fill="none"/><path d="M619 16H627L623 21Z"/>
 <text x="429" y="25" font-family="Liberation Sans" font-size="21" fill="#e0e0e0" text-anchor="middle">A</text>
</g>
<path d="M286 4V28M319 4V28M446 4V28M546 4V28" stroke="#3f4857"/>
<use href="#dd" x="143" y="14"/><use href="#dd" x="182" y="14"/><use href="#dd" x="222" y="14"/><use href="#dd" x="356" y="14"/><use href="#dd" x="482" y="14"/><use href="#dd" x="606" y="14"/>
<use href="#dd" x="1452" y="15"/><use href="#dd" x="1533" y="14"/><use href="#dd" x="1090" y="45"/>
<!-- right title icons -->
<path d="M1298 11L1293 15L1298 19Z" fill="#d8d8d8"/>
<path d="M1310 8H1313V12H1314V24H1307V14ZM1316 8H1319L1321 14V24H1315V12H1316Z" fill="#d8d8d8"/>
<circle cx="1341" cy="10" r="4" fill="#d8d8d8"/><path d="M1338 14H1344V21H1349V25H1333V21H1338Z" fill="#d8d8d8"/>
<path d="M1468 9H1472L1474 18H1482M1474 20H1482" stroke="#d8d8d8" stroke-width="1.500" fill="none"/><circle cx="1475" cy="23" r="1.500" fill="#d8d8d8"/><circle cx="1481" cy="23" r="1.500" fill="#d8d8d8"/>
<path d="M1494 4V26" stroke="#3f4857"/>
<circle cx="1513" cy="15" r="8" fill="#cfe4f4"/><text x="1513" y="20" font-size="13" font-weight="bold" font-family="Liberation Sans" fill="#1a4f80" text-anchor="middle">?</text>
<path d="M1607 20H1616" stroke="#eee" stroke-width="2.400"/>
<path d="M1634 11H1646V20H1634ZM1630 14H1642V23H1630Z" fill="none" stroke="#eee" stroke-width="1.500"/>
<path d="M1661 9L1672 21M1672 9L1661 21" stroke="#f2f2f2" stroke-width="2.200"/>
<!-- camera collab icon in tab row -->
<rect x="1062" y="41" width="15" height="8" rx="2" fill="#d8d8d8"/><circle cx="1069" cy="45" r="2" fill="#333"/>

<!-- Ribbon icons -->
<g>
 <polygon points="21,62 43,85 35,85 40,96 35,96 29,86 22,90" fill="#dcdcdc"/>
 <!-- wall --><path d="M75 68Q90 73 104 64V88Q88 92 88 95Q76 92 75 85Z" fill="#dcdcdc"/>
 <!-- door --><path d="M123 63L136 61V95L123 92Z" fill="#dcdcdc"/><rect x="136" y="61" width="14" height="26" fill="#6d7480"/>
 <!-- window --><rect x="170" y="61" width="29" height="28" fill="#d4d4d4"/><path d="M174 65H195V85H174Z" fill="#999"/><path d="M174 75H195M184 65V85" stroke="#dcdcdc" stroke-width="2"/><rect x="168" y="89" width="32" height="4" fill="#e6e6e6"/>
 <!-- component --><path d="M243 72L251 64H258V72H268L275 63V86L268 94H243V80L251 77V72Z" fill="#cfcfcf"/><path d="M258 72L268 72L255 82L243 81" fill="none" stroke="#444"/>
 <!-- column --><rect x="331" y="61" width="16" height="35" rx="8" fill="#dcdcdc"/>
 <!-- roof --><path d="M382 60H418V72L400 96H382Z" fill="#e6e6e6"/><path d="M382 96L400 78L418 60H382Z" fill="#fff"/><path d="M400 78V96L418 72V60Z" fill="#bdbdbd"/>
 <!-- ceiling --><path d="M433 94V71L467 62V87H443Z" fill="#dcdcdc"/><path d="M436 71L444 62H467V70L458 78H436Z" fill="#56aee6"/><path d="M441 70H446M452 68H458" stroke="#fff" stroke-width="2.500"/>
 <!-- floor --><path d="M492 62H518V86L505 88H489L484 94Z" fill="#dcdcdc"/><path d="M484 94L497 78H518V86L505 94Z" fill="#4aa4e8"/><path d="M497 84H503M510 84H514M492 91H500" stroke="#fff" stroke-width="2"/>
 <!-- curtain system --><g fill="none" stroke="#6fb0e0"><path d="M537 65H569L558 96H543Z" stroke-width="1.300"/><path d="M541 65L545 96M549 65L548 96M556 65L553 96M537 72H566M538 80H563M541 88H561"/></g>
 <!-- curtain grid --><rect x="584" y="62" width="32" height="33" fill="#d6d6d6"/><path d="M600 62V95M584 74H616" stroke="#56aee6" stroke-width="2.200"/>
 <!-- mullion --><rect x="633" y="62" width="32" height="33" fill="#d6d6d6"/><path d="M648 62V95M634 72H664M634 84H664" stroke="#4a9ad8" stroke-width="3"/>
 <!-- railing --><rect x="696" y="64" width="34" height="4" fill="#7fc4f0"/><path d="M699 70V86M704 70V86M709 70V86M714 70V86M719 70V86M724 70V86M727 70V86" stroke="#7fc4f0" stroke-width="1.400"/><path d="M696 75H730" stroke="#7fc4f0" stroke-width="1.500"/><rect x="696" y="88" width="34" height="4" fill="#dcdcdc"/>
 <!-- ramp --><path d="M751 80L777 65H783V89H760L751 85Z" fill="#e0e0e0"/>
 <!-- stair --><path d="M804 61L824 74V85L808 94L792 82V72L800 68Z" fill="#e0e0e0"/><path d="M800 68L812 76V84M792 72L806 82V94" stroke="#777" fill="none"/>
 <!-- model text --><text x="858" y="94" font-family="Liberation Sans" font-size="44" font-weight="bold" fill="#dcdcdc" text-anchor="middle">A</text>
 <!-- model line --><path d="M888 62V92M896 62Q898 85 917 94" fill="none" stroke="#c9c9c9" stroke-width="1.300"/><circle cx="896" cy="62" r="1.500" fill="#ddd"/><circle cx="917" cy="94" r="1.500" fill="#ddd"/><circle cx="888" cy="92" r="1.500" fill="#ddd"/>
 <!-- model group --><path d="M942 62H937V93H942M963 62H968V93H963" fill="none" stroke="#c9c9c9" stroke-width="1.400"/><circle cx="949" cy="72" r="7" fill="#dcdcdc"/><rect x="948" y="72" width="15" height="16" rx="2" fill="#eee" stroke="#444"/>
 <!-- room --><rect x="992" y="60" width="34" height="34" fill="#d8d8d8"/><rect x="1002" y="72" width="24" height="22" fill="#5aaee6"/><path d="M1002 72L1026 94M1026 72L1002 94" stroke="#2f6f9f"/>
 <!-- separator --><rect x="1043" y="60" width="34" height="34" fill="#d8d8d8"/><rect x="1053" y="72" width="22" height="22" fill="#5aaee6"/><path d="M1060 96L1079 75L1083 80L1066 97Z" fill="#e3b36e"/>
 <!-- tag room --><rect x="1105" y="60" width="34" height="32" fill="#d8d8d8"/><rect x="1115" y="72" width="24" height="20" fill="#5aaee6"/><path d="M1115 72L1139 92M1139 72L1115 92" stroke="#2f6f9f"/><rect x="1127" y="85" width="14" height="12" fill="#39424f" stroke="#ddd"/>
 <!-- area --><rect x="1156" y="60" width="17" height="18" fill="#e9c58d"/><path d="M1158 62L1171 76M1171 62L1158 76" stroke="#d9623a" stroke-width="2"/>
 <path d="M1157 89H1172V105H1157Z" fill="#59606c"/><path d="M1157 105L1172 89" stroke="#3a4353" stroke-width="3"/>
 <rect x="1156" y="115" width="17" height="18" fill="#e9c58d"/><path d="M1158 117L1171 131M1171 117L1158 131" stroke="#d9623a" stroke-width="2"/><rect x="1166" y="126" width="9" height="9" fill="#ddd" stroke="#333"/>
 <use href="#dd" x="1216" y="71"/><use href="#dd" x="1246" y="125"/><use href="#dd" x="1175" y="118"/>
 <!-- by face --><path d="M1285 88L1308 61L1316 69L1293 95Z" fill="#bdbdbd"/><path d="M1291 72L1312 93" stroke="#5aaee6" stroke-width="2"/><path d="M1285 64L1295 74" stroke="#5aaee6" stroke-width="2"/>
 <!-- shaft --><path d="M1328 66H1340V75H1328ZM1346 66H1358V75H1346ZM1328 79H1340V88H1328ZM1346 79H1358V88H1346Z" fill="#bcbcbc"/><path d="M1343 60V95" stroke="#5aaee6" stroke-width="2"/>
 <!-- opening small --><path d="M1377 64V80M1370 72H1385" stroke="#5aaee6" stroke-width="1.600"/><rect x="1372" y="68" width="10" height="2.500" fill="#ddd"/><rect x="1372" y="74" width="10" height="2.500" fill="#ddd"/>
 <path d="M1370 88L1384 104" stroke="#ccc" stroke-width="4"/><path d="M1377 88V104" stroke="#5aaee6" stroke-width="1.500"/>
 <path d="M1370 133V120L1384 116V120H1376V133Z" fill="#cfcfcf"/><path d="M1376 122V133" stroke="#5aaee6" stroke-width="1.500"/>
 <!-- level grid --><path d="M1452 84H1466" stroke="#6f7886" stroke-dasharray="2 2"/><path d="M1465 78L1470 84L1465 90L1460 84Z" fill="#6f7886"/>
 <path d="M1452 107H1470M1452 113H1470M1457 102V119M1464 102V119" stroke="#dcdcdc" stroke-width="1.400"/>
 <!-- set --><path d="M1522 72L1556 60V84L1522 93Z" fill="#5aaee6"/><path d="M1533 68V89M1544 64V86M1522 80L1556 70M1522 87L1556 77" stroke="#bfe0f5"/><path d="M1522 72V93L1528 93V71Z" fill="#dcdcdc"/>
 <!-- show --><rect x="1564" y="62" width="14" height="18" fill="#9c9c9c"/><path d="M1564 71H1578M1571 62V80" stroke="#3a4353"/><circle cx="1578" cy="72" r="4.500" fill="#f0c060"/>
 <!-- ref plane --><path d="M1568 90H1582L1578 106H1564Z" fill="#9c9c9c"/><path d="M1566 104L1582 92" stroke="#d9623a" stroke-width="1.500"/>
 <!-- viewer --><rect x="1564" y="116" width="18" height="18" fill="#e6e6e6"/><rect x="1569" y="121" width="9" height="9" fill="#3f7fb0"/>
 <!-- dropdowns -->
 <use href="#dd" x="91" y="122"/><use href="#dd" x="258" y="122"/><use href="#dd" x="339" y="122"/><use href="#dd" x="400" y="122"/><use href="#dd" x="501" y="122"/><use href="#dd" x="713" y="122"/><use href="#dd" x="978" y="116"/><use href="#dd" x="1539" y="122"/><use href="#dd" x="54" y="150"/><use href="#dd" x="1174" y="150"/>
</g>

<!-- Properties icons -->
<path d="M28 232H47V239H56V262H36V255H28Z" fill="#dcdcdc"/><rect x="36" y="245" width="20" height="19" fill="#e4e4e4" stroke="#999" stroke-dasharray="2 2"/>
<polygon points="221,246 229,246 225,250" fill="#6f7886"/>
<path d="M140 298L145 302L150 298" stroke="#7f8794" fill="none"/>
<rect x="160" y="293" width="13" height="15" fill="#dcdcdc"/><path d="M160 300H173M166 293V308" stroke="#343c4b" stroke-width="1.500"/>
<path d="M208 326L211 323L214 326M208 330L211 327L214 330" stroke="#ddd" fill="none"/>
<path d="M208 745L211 742L214 745M208 749L211 746L214 749" stroke="#ddd" fill="none"/>
<path d="M208 830L211 827L214 830M208 834L211 831L214 834" stroke="#ddd" fill="none"/>
<path d="M225 329L230 324L235 329" stroke="#7f8794" stroke-width="2" fill="none"/>
<path d="M225 826L230 831L235 826" stroke="#7f8794" stroke-width="2" fill="none"/>
<!-- tab icons -->
<g fill="#8a919c"><rect x="248" y="193" width="10" height="18"/><rect x="253" y="197" width="8" height="14"/></g>
<g fill="#dcdcdc"><rect x="410" y="193" width="10" height="18"/><rect x="415" y="197" width="8" height="14"/></g>
<g fill="#8a919c"><rect x="566" y="193" width="10" height="18"/><rect x="571" y="197" width="8" height="14"/><rect x="788" y="193" width="10" height="18"/><rect x="793" y="197" width="8" height="14"/></g>
<path d="M963 193L972 203H969V214H957V203H954Z" fill="#8a919c"/><rect x="960" y="206" width="6" height="7" fill="#343c4b"/>
<path d="M1286 196H1296M1286 199H1296" stroke="#8a919c"/><path d="M1287 202H1295L1291 206Z" fill="#8a919c"/>
<!-- PB icons -->
<circle cx="1329" cy="230" r="6.500" fill="none" stroke="#aab0b9" stroke-width="2"/><path d="M1334 235L1339 240" stroke="#aab0b9" stroke-width="2"/>
<rect x="1329" y="440" width="18" height="18" fill="#e4e4e4"/><path d="M1332 444H1337V448H1332ZM1339 444H1344V448H1339ZM1332 451H1337V455H1332ZM1339 451H1344V455H1339Z" fill="#555"/>
<rect x="1329" y="615" width="17" height="16" fill="#cfd2d6"/><path d="M1329 620H1346M1329 625H1346M1335 615V631" stroke="#3a4352"/>
<path d="M1666 266L1671 261L1676 266M1666 853L1671 858L1676 853" stroke="#7f8794" stroke-width="2" fill="none"/>
<path d="M1284 228L1290 222L1296 228M1284 831L1290 837L1296 831" stroke="#7f8794" stroke-width="2" fill="none"/>
<rect x="1285" y="520" width="6" height="18" fill="#4a5363" rx="3"/>
<!-- view bar icons -->
<rect x="329" y="848" width="16" height="14" fill="#a6a9ae"/>
<path d="M356 851L360 847H370V858L366 862H356ZM356 851H366V862M366 851L370 847" fill="none" stroke="#c9cdd3"/>
<circle cx="387" cy="853" r="4.500" fill="#f0c060"/><circle cx="394" cy="857" r="3.500" fill="#5aaee6"/>
<path d="M408 847H420V860H426V864H408Z" fill="#9b9b9b"/>
<path d="M435 855H448M441 848V862" stroke="#cdd" stroke-dasharray="2 2"/><path d="M442 851L449 862M449 851L442 862" stroke="#d9623a" stroke-width="2"/>
<path d="M465 855H478M471 848V862" stroke="#cdd" stroke-dasharray="2 2"/><circle cx="476" cy="856" r="3.500" fill="#5aaee6"/>
<circle cx="491" cy="856" r="3.500" fill="none" stroke="#dcdcdc"/><circle cx="499" cy="854" r="3.500" fill="none" stroke="#dcdcdc"/>
<circle cx="521" cy="852" r="4.500" fill="#5aaee6"/><rect x="519" y="857" width="4" height="4" fill="#ddd"/>
<rect x="542" y="848" width="10" height="12" fill="#c9cdd3"/><path d="M552 856V862H546" stroke="#ddd" stroke-dasharray="2 1" fill="none"/>
<rect x="572" y="848" width="10" height="14" fill="#8f8f8f"/><circle cx="578" cy="858" r="3.500" fill="#5aaee6"/>
<path d="M592 848V860M602 848V860H592M592 848H606" stroke="#c9cdd3" fill="none"/><circle cx="604" cy="858" r="3.500" fill="#5aaee6"/>
<path d="M623 850L619 855L623 860" stroke="#8a919c" stroke-width="1.500" fill="none"/>
<rect x="936" y="851" width="18" height="5" fill="#4a5363" rx="2"/>
<path d="M1269 848L1274 854L1269 860" stroke="#8a919c" stroke-width="1.800" fill="none"/>
<!-- status icons -->
<path d="M606 872H616V892H606Z" fill="#6aa8dc"/><circle cx="615" cy="874" r="3.500" fill="#e6b070"/><path d="M612 878H620V890H612Z" fill="#b6c0cc"/>
<path d="M841 880L844 883L847 880" stroke="#6f7886" fill="none"/>
<path d="M862 884L870 874L876 874V890H862Z" fill="#8a8f96"/>
<rect x="911" y="871" width="16" height="19" fill="#eee"/><path d="M914 875H924M914 880H924M914 885H924" stroke="#333"/>
<rect x="937" y="871" width="16" height="19" fill="#7b818b"/><path d="M940 875H950M940 880H950M940 885H950" stroke="#333"/>
<path d="M1174 878L1177 881L1180 878" stroke="#6f7886" fill="none"/>
<path d="M1193 879L1195 882L1199 876" stroke="#333" stroke-width="1.500" fill="none"/>
<g>
 <path d="M1429 873H1443" stroke="#bbb" stroke-width="3"/><polygon points="1438,878 1446,885 1442,886 1444,890 1440,891" fill="#fff"/>
 <path d="M1456 881L1466 872V885Z" fill="#5aaee6"/><path d="M1468 872L1472 877M1472 872L1468 877" stroke="#d9623a" stroke-width="1.800"/><polygon points="1464,878 1472,885 1468,886 1470,890 1466,891" fill="#fff"/>
 <rect x="1483" y="871" width="10" height="4" fill="#bbb"/><rect x="1485" y="875" width="6" height="5" fill="#999"/><polygon points="1490,878 1498,885 1494,886 1496,890 1492,891" fill="#fff"/>
 <path d="M1508 878L1518 871V888H1508Z" fill="#5aaee6"/><polygon points="1516,878 1524,885 1520,886 1522,890 1518,891" fill="#fff"/>
 <path d="M1535 877H1545M1540 872V883" stroke="#ddd" stroke-dasharray="2 1"/><path d="M1545 871L1549 876M1549 871L1545 876" stroke="#d9623a" stroke-width="1.800"/><polygon points="1541,878 1549,885 1545,886 1547,890 1543,891" fill="#fff"/>
 <circle cx="1569" cy="880" r="7" fill="none" stroke="#7f8794" stroke-width="1.600" stroke-dasharray="2 3"/>
 <path d="M1585 871H1602L1596 880V890L1591 887V880Z" fill="#c4c8ce"/>
</g>
</svg>
</div></body></html>
